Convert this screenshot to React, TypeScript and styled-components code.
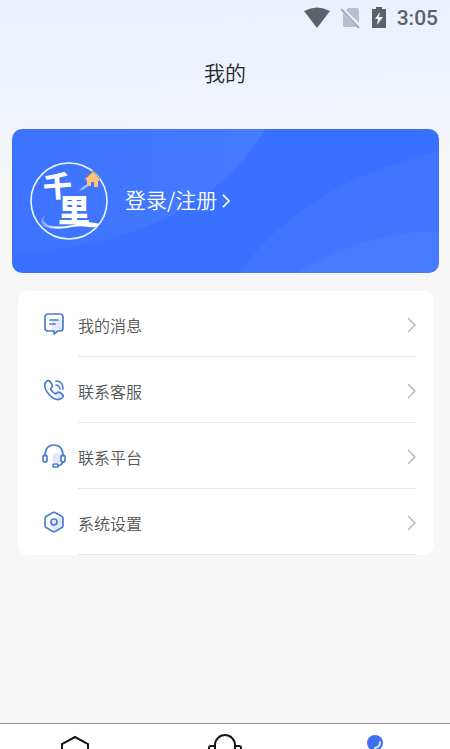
import React from "react";
import styled, { createGlobalStyle } from "styled-components";

const GlobalStyle = createGlobalStyle`
  * { box-sizing: border-box; }
  body {
    margin: 0;
    font-family: "Noto Sans CJK SC", sans-serif;
    background: #f7f7f8;
  }
  a { color: inherit; text-decoration: none; }
  svg { display: block; flex: none; }
`;

const Screen = styled.div`
  display: flex;
  flex-direction: column;
  height: 100vh;
  overflow: hidden;
  background: linear-gradient(178deg, #eaf0fe 0, #edf2fd 80px, #f7f7f8 190px);
`;

const StatusBar = styled.div`
  display: flex;
  align-items: center;
  justify-content: flex-end;
  height: 36px;
  padding-right: 12px;
  color: #5e6268;
`;

const Clock = styled.time`
  margin-left: 10px;
  font: 500 21px/36px Roboto, sans-serif;
`;

const Title = styled.h1`
  margin: 0;
  padding: 20px 0 41px;
  color: #25272d;
  font-size: 21px;
  font-weight: 350;
  line-height: 32px;
  text-align: center;
`;

const Main = styled.main`
  flex: 1;
  min-height: 0;
`;

const ProfileCard = styled.section`
  position: relative;
  height: 144px;
  margin: 0 11px 18px 12px;
  overflow: hidden;
  border-radius: 10px;
  background: #3870ff;
`;

const Waves = styled.svg`
  position: absolute;
  inset: 0;
  width: 100%;
  height: 100%;
`;

const LoginLink = styled.a`
  position: relative;
  display: flex;
  align-items: center;
  height: 100%;
  padding-left: 17px;
  color: #fff;
  font-size: 21px;
  font-weight: 350;
  line-height: 32px;
`;

const LoginLabel = styled.span`
  margin: 0 5px 4px 16px;
`;

const LogoText = styled.text`
  fill: #fff;
  font-family: "Noto Sans CJK SC", sans-serif;
  font-weight: 900;
`;

const Menu = styled.ul`
  margin: 0 16px 0 18px;
  padding: 0 18px 0 24px;
  overflow: hidden;
  border-radius: 9px;
  background: #fff;
  list-style: none;
`;

const MenuLink = styled.a`
  display: flex;
  align-items: center;
  gap: 12px;
  color: #555;
`;

const MenuBody = styled.span`
  display: flex;
  flex: 1;
  align-items: center;
  justify-content: space-between;
  height: 66px;
  padding-top: 2px;
  border-bottom: 1px solid #e8e8e8;
  font-size: 16px;
  font-weight: 350;
`;

const TabBar = styled.nav`
  display: grid;
  flex: none;
  grid-template-columns: repeat(3, 1fr);
  height: 26px;
  overflow: hidden;
  border-top: 1px solid #929292;
  background: #fff;
`;

const Tab = styled.a`
  display: flex;
  justify-content: center;
  padding-top: 8px;
`;

const WifiIcon = () => (
  <svg width="28" height="24" viewBox="0 0 28 24" aria-hidden="true">
    <path d="M1 5Q14-2 27 5L14 22Z" fill="currentColor" />
  </svg>
);

const NoSimIcon = () => (
  <svg width="22" height="24" viewBox="0 0 22 24" aria-hidden="true">
    <path d="M8 2h9q2 0 2 2v13L6 4ZM3 7l14 14H5q-2 0-2-2Z" fill="#b9bfca" />
    <path d="m1 3 18 19" stroke="#a7adb7" strokeWidth="2" />
  </svg>
);

const BatteryIcon = () => (
  <svg width="16" height="24" viewBox="0 0 16 24" aria-hidden="true">
    <path d="M5 1h6v2h4v19H1V3h4Z" fill="currentColor" />
    <path d="M9 6 4 13h3l-1 6 6-8H8Z" fill="#edf2fd" />
  </svg>
);

const StatusIcons = styled.div`
  display: flex;
  gap: 9px;
`;

const Logo = () => (
  <svg width="80" height="80" viewBox="0 0 80 80" role="img" aria-label="千里">
    <defs>
      <linearGradient id="swoosh">
        <stop offset="0" stopColor="#fff" stopOpacity="0.25" />
        <stop offset="0.3" stopColor="#fff" />
      </linearGradient>
    </defs>
    <circle cx="40" cy="40" r="38" fill="none" stroke="#e8f6ff" strokeWidth="1.6" />
    <LogoText x="14" y="36" fontSize="29" transform="rotate(-4 28 26)">千</LogoText>
    <LogoText x="29" y="61" fontSize="32">里</LogoText>
    <path d="M17 54Q11 58 19 64Q29 67 43 64Q59 59 71 63Q68 67 60 66Q48 64 38 67Q24 69 17 66Q7 60 17 54Z" fill="url(#swoosh)" />
    <path d="M50 30Q54 24 62 22Q57 28 50 30Z" fill="#a8c4ff" />
    <path d="m56 18 8-7 7 8-2 1v6h-4v-5h-3v4h-4v-7Z" fill="#ffc27c" />
    <path d="m56 17 8-7 7 8" fill="none" stroke="#9b765f" strokeWidth="1" />
    <path d="m57 19 7-6 6 6" fill="none" stroke="#ffc27c" strokeWidth="1.5" />
  </svg>
);

const Arrow = ({ small = false }: { small?: boolean }) => (
  <svg width={small ? 8 : 9} height={small ? 14 : 16} viewBox="0 0 9 16" aria-hidden="true">
    <path d="m1 1 7 7-7 7" fill="none" stroke={small ? "#fff" : "#b8b8b8"} strokeWidth={small ? 2 : 1.5} />
  </svg>
);

const IconFrame = ({ children }: { children: React.ReactNode }) => (
  <svg width="24" height="24" viewBox="0 0 24 24" fill="none" stroke="#4e7ccf" strokeWidth="1.7" strokeLinecap="round" strokeLinejoin="round" aria-hidden="true">
    {children}
  </svg>
);

const MessageIcon = () => (
  <IconFrame>
    <path d="M10 8h11v11h-6l-3 3-2-3Z" fill="#dfeaff" stroke="none" />
    <path d="M6 2h12q3 0 3 3v11q0 3-3 3h-2l-4 3v-3H6q-3 0-3-3V5q0-3 3-3Z" />
    <path d="M8 8h8M8 12h5" />
  </IconFrame>
);

const PhoneIcon = () => (
  <IconFrame>
    <path d="m11 15 5-2 5 5-4 4Z" fill="#dfeaff" stroke="none" />
    <path d="M4.500 3.500Q6.500 1.800 8 3.500L10 6.500Q11 8 9.500 9.500Q8 11 9.500 12.500L12 15Q13.500 16.500 15 15Q16.500 13.500 18 14.500L20.500 16.500Q22 18 20.500 19.500Q17 23 12 20.500Q6 17 3.500 11Q1.500 6 4.500 3.500Z" />
    <path d="M14 7q3 0 4 4M14 3q7 0 7 8" />
  </IconFrame>
);

const HeadsetIcon = () => (
  <IconFrame>
    <circle cx="15" cy="14" r="5" fill="#dfeaff" stroke="none" />
    <path d="M3 12Q3 1 12 1t9 11M21 18q-1 3-5 4" />
    <rect x="1" y="11" width="4" height="7" rx="2" />
    <rect x="19" y="11" width="4" height="7" rx="2" />
    <rect x="11" y="20" width="5" height="3" rx="1" />
  </IconFrame>
);

const SettingsIcon = () => (
  <IconFrame>
    <path d="m14 7 7 1v9l-8 4-5-5Z" fill="#dfeaff" stroke="none" />
    <path d="M11 2.600q1-.6 2 0l7 4q1 .6 1 1.700v7.400q0 1.100-1 1.700l-7 4q-1 .6-2 0l-7-4q-1-.6-1-1.700V8.300q0-1.100 1-1.700Z" />
    <circle cx="12" cy="12" r="3" />
  </IconFrame>
);

const items = [
  { label: "我的消息", Icon: MessageIcon },
  { label: "联系客服", Icon: PhoneIcon },
  { label: "联系平台", Icon: HeadsetIcon },
  { label: "系统设置", Icon: SettingsIcon },
];

const TabIcon = ({ children }: { children: React.ReactNode }) => (
  <svg width="38" height="36" viewBox="0 0 38 36" fill="none" stroke="#171717" strokeWidth="2" aria-hidden="true">
    {children}
  </svg>
);

export default function App() {
  return (
    <>
      <GlobalStyle />
      <Screen>
        <StatusBar>
          <StatusIcons>
            <WifiIcon />
            <NoSimIcon />
            <BatteryIcon />
          </StatusIcons>
          <Clock>3:05</Clock>
        </StatusBar>
        <Title>我的</Title>
        <Main>
          <ProfileCard>
            <Waves viewBox="0 0 427 144" preserveAspectRatio="none" aria-hidden="true">
              <defs>
                <linearGradient id="leftWave" x1="0" y1="0" x2="1" y2="0">
                  <stop offset="0" stopColor="#fff" stopOpacity="0.02" />
                  <stop offset="1" stopColor="#fff" stopOpacity="0.07" />
                </linearGradient>
              </defs>
              <path d="M0 0H254Q182 116 0 124Z" fill="url(#leftWave)" />
              <path d="M227 144Q294 52 427 23V144Z" fill="#fff" fillOpacity="0.04" />
              <path d="M284 144Q350 103 427 102V144Z" fill="#fff" fillOpacity="0.04" />
            </Waves>
            <LoginLink href="#login">
              <Logo />
              <LoginLabel>登录/注册</LoginLabel>
              <Arrow small />
            </LoginLink>
          </ProfileCard>
          <Menu>
            {items.map(({ label, Icon }) => (
              <li key={label}>
                <MenuLink href="#">
                  <Icon />
                  <MenuBody>
                    {label}
                    <Arrow />
                  </MenuBody>
                </MenuLink>
              </li>
            ))}
          </Menu>
        </Main>
        <TabBar>
          <Tab href="#home" aria-label="首页">
            <TabIcon><path d="M6 29V12l13-7 13 7v17Z" /></TabIcon>
          </Tab>
          <Tab href="#service" aria-label="客服">
            <TabIcon>
              <path d="M9 23V13a10 10 0 0 1 20 0v10M9 14H5q-2 0-2 2v7h6M29 14h4q2 0 2 2v7h-6" />
            </TabIcon>
          </Tab>
          <Tab href="#mine" aria-label="我的" aria-current="page">
            <TabIcon>
              <circle cx="19" cy="11" r="8" fill="#3b6ff0" stroke="none" />
              <path d="M24 10q0 5-5 6" stroke="#dce8ff" strokeLinecap="round" />
            </TabIcon>
          </Tab>
        </TabBar>
      </Screen>
    </>
  );
}
